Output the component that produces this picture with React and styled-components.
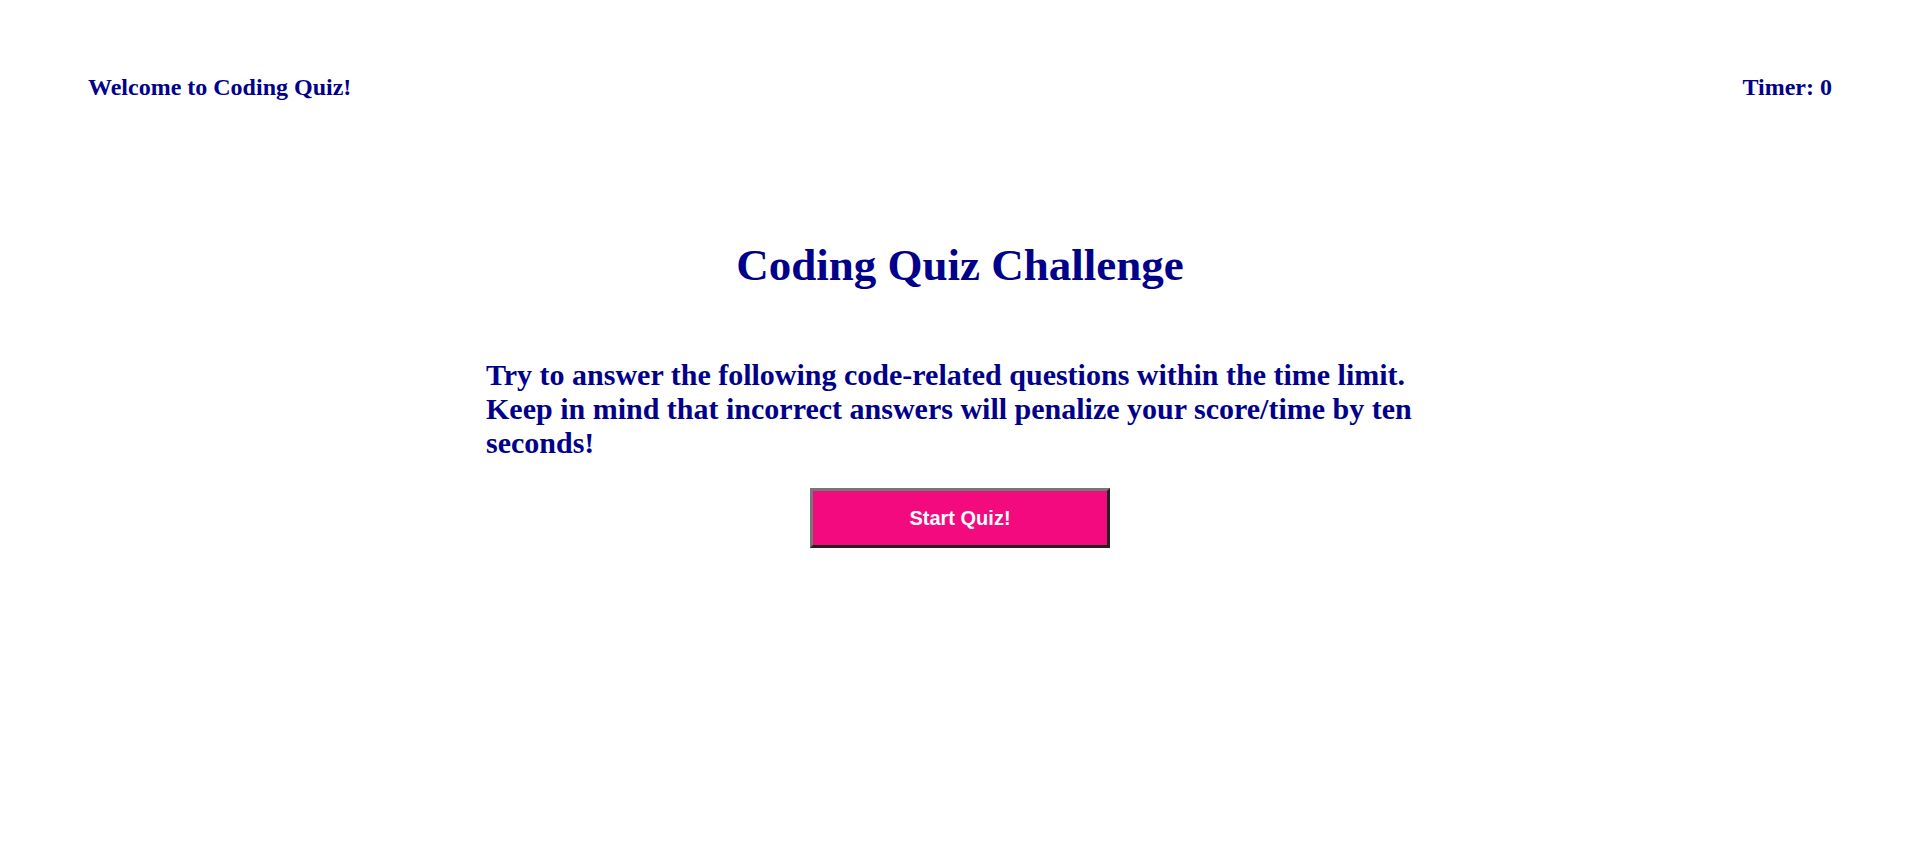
import React from "react";
import styled, { createGlobalStyle } from "styled-components";

const Global = createGlobalStyle`
  html, body { margin: 0; padding: 0; background: #ffffff; }
  body { font-family: "Liberation Serif", "Times New Roman", serif; color: #00008b; }
`;

const Header = styled.header`
  display: flex;
  justify-content: space-between;
  align-items: center;
  padding: 74px 88px 0 88px;
`;

const HeaderText = styled.h3`
  margin: 0;
  font-size: 24px;
  font-weight: bold;
  color: #00008b;
`;

const Main = styled.main`
  display: flex;
  flex-direction: column;
  align-items: center;
`;

const Title = styled.h1`
  margin: 138px 0 0 0;
  font-size: 45px;
  font-weight: bold;
  color: #00008b;
`;

const Intro = styled.p`
  width: 948px;
  margin: 67px 0 0 0;
  font-size: 30px;
  font-weight: bold;
  color: #00008b;
`;

const StartButton = styled.button`
  margin-top: 28px;
  width: 300px;
  height: 60px;
  background: #f20a7e;
  color: #ffffff;
  font-family: "Liberation Sans", Arial, sans-serif;
  font-size: 20px;
  font-weight: bold;
  border: 3px outset #767676;
  cursor: pointer;
`;

export default function App() {
  return (
    <>
      <Global />
      <Header>
        <HeaderText>Welcome to Coding Quiz!</HeaderText>
        <HeaderText>Timer: 0</HeaderText>
      </Header>
      <Main>
        <Title>Coding Quiz Challenge</Title>
        <Intro>
          Try to answer the following code-related questions within the time limit.
          Keep in mind that incorrect answers will penalize your score/time by ten seconds!
        </Intro>
        <StartButton>Start Quiz!</StartButton>
      </Main>
    </>
  );
}
